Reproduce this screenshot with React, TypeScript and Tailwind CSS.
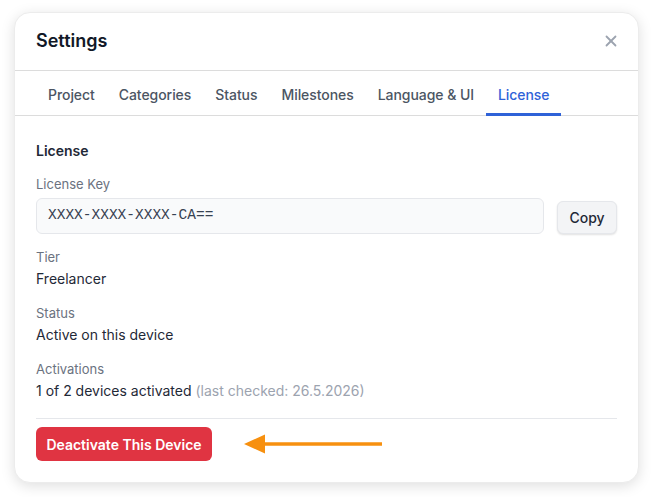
import { X } from 'lucide-react'

const tabs = ['Project', 'Categories', 'Status', 'Milestones', 'Language & UI', 'License']

function Field({ label, children }: { label: string; children: React.ReactNode }) {
  return (
    <div className="flex flex-col gap-[2px]">
      <div className="text-[13px] leading-[18px] text-[#6b7280]">{label}</div>
      <div className="text-[14px] leading-[22px] text-[#1f2937]">{children}</div>
    </div>
  )
}

export default function App() {
  return (
    <div className="min-h-[497px] bg-white pt-[12px] pl-[14px] font-['Inter','Noto_Sans',sans-serif]">
      <div className="w-[625px] h-[471px] rounded-2xl bg-white shadow-[0_3px_14px_rgba(0,0,0,0.13)] border border-[#ececec] flex flex-col overflow-hidden">
        {/* header */}
        <div className="h-[58px] shrink-0 flex items-center justify-between px-[21px] pb-[2px] border-b border-[#dcdcdc]">
          <h2 className="text-[18px] font-semibold text-[#111827]">Settings</h2>
          <button className="text-[#9ca3af] mr-[-3px]">
            <X size={18} strokeWidth={2.4} />
          </button>
        </div>

        {/* tabs */}
        <div className="flex px-[21px] border-b border-[#dcdcdc] shrink-0">
          {tabs.map(t => (
            <div
              key={t}
              className={
                t === 'License'
                  ? 'px-3 pt-[14px] pb-[8px] leading-5 text-[14px] tracking-[-0.06px] font-medium text-[#2f62d8] border-b-[3px] border-[#2f62d8] -mb-px'
                  : 'px-3 pt-[14px] pb-[8px] leading-5 text-[14px] tracking-[-0.06px] font-medium text-[#4b5563] border-b-[3px] border-transparent -mb-px'
              }
            >
              {t}
            </div>
          ))}
        </div>

        {/* body */}
        <div className="px-[21px] pt-[25px] flex flex-col">
          <h3 className="text-[14px] leading-5 font-semibold text-[#1f2937]">License</h3>

          <div className="mt-[14px] text-[13px] leading-[18px] text-[#6b7280]">License Key</div>
          <div className="mt-[5px] flex items-center gap-[13px]">
            <div className="flex-1 h-[36px] flex items-center px-[11px] rounded-md bg-[#f9fafb] border border-[#e5e7eb] font-['Liberation_Mono',monospace] text-[14.5px] text-[#374151]">
              XXXX-XXXX-XXXX-CA==
            </div>
            <button className="h-[33px] w-[60px] mt-[3px] rounded-md bg-[#f3f4f6] border border-[#e5e7eb] shadow-[0_1px_2px_rgba(0,0,0,0.12)] text-[14px] font-medium text-[#1f2937]">
              Copy
            </button>
          </div>

          <div className="mt-[14px] flex flex-col gap-[14px]">
            <Field label="Tier">Freelancer</Field>
            <Field label="Status">Active on this device</Field>
            <Field label="Activations">
              1 of 2 devices activated <span className="text-[#9ca3af]">(last checked: 26.5.2026)</span>
            </Field>
          </div>

          <div className="mt-[16px] border-t border-[#e5e7eb]" />

          <div className="mt-[8px] flex items-center">
            <button className="h-[34px] w-[176px] rounded-md bg-[#e03442] text-white text-[14px] font-semibold">
              Deactivate This Device
            </button>
            <svg width="140" height="22" viewBox="0 0 140 22" className="ml-[32px]">
              <line x1="18" y1="11" x2="138" y2="11" stroke="#f7900f" strokeWidth="3.5" />
              <polygon points="0,11 21,1.5 21,20.5" fill="#f7900f" />
            </svg>
          </div>
        </div>
      </div>
    </div>
  )
}
